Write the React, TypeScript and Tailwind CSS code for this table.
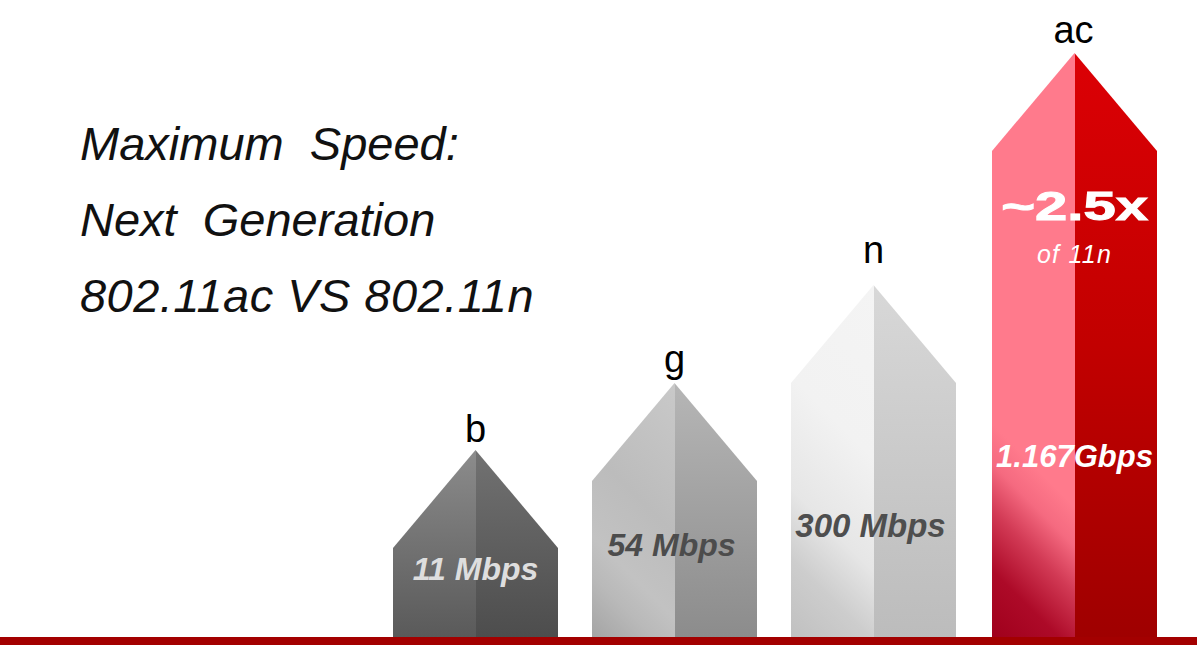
import React from "react";

type Bar = {
  label: string;
  labelGap: string;
  shape: string;
  left: string;
  right: string;
  body: React.ReactNode;
};

const bars: Bar[] = [
  {
    label: "b",
    labelGap: "mb-[2px]",
    shape: "h-[187px]",
    left: "bg-linear-to-b from-[#8c8c8c] to-[#5a5a5a]",
    right: "bg-linear-to-b from-[#727272] to-[#4d4d4d]",
    body: (
      <div className="flex flex-col items-center pt-[103px] text-[32px] leading-none font-bold italic text-[#dedede]">
        11 Mbps
      </div>
    ),
  },
  {
    label: "g",
    labelGap: "mb-[5px]",
    shape: "h-[254px]",
    left: "bg-[linear-gradient(45deg,#a4a4a4_0%,#b9b9b9_18%,#c2c2c2_30%,#bcbcbc_55%,#c9c9c9_100%)]",
    right: "bg-linear-to-b from-[#b6b6b6] to-[#8c8c8c]",
    body: (
      <div className="flex flex-col items-center pt-[146px] pr-[6px] text-[32px] leading-none font-bold italic text-[#4c4c4c]">
        54 Mbps
      </div>
    ),
  },
  {
    label: "n",
    labelGap: "mb-[16px]",
    shape: "h-[352px]",
    left: "bg-[linear-gradient(45deg,#c0c0c0_0%,#cdcdcd_18%,#e6e6e6_34%,#f2f2f2_60%,#f4f4f4_100%)]",
    right: "bg-linear-to-b from-[#d8d8d8] to-[#bcbcbc]",
    body: (
      <div className="flex flex-col items-center pt-[224px] pr-[6px] text-[33px] leading-none font-bold italic text-[#4e4e4e]">
        300 Mbps
      </div>
    ),
  },
  {
    label: "ac",
    labelGap: "mb-[4px]",
    shape: "h-[584px] ml-[2px]",
    left: "bg-[linear-gradient(45deg,#a0001c_0%,#ad0a28_10%,#d23a55_19%,#f56a80_26%,#ff7a8c_32%,#ff7a8c_100%)]",
    right: "bg-linear-to-b from-[#dc0005] via-[#c20000] to-[#9f0000]",
    body: (
      <div className="flex flex-col items-center pt-[133px] text-white">
        <span className="scale-x-[1.45] text-[40px] leading-none font-bold [-webkit-text-stroke:1px_white]">
          ~2.5x
        </span>
        <span className="mt-[16px] text-[25px] leading-none italic tracking-[0.05em]">of 11n</span>
        <span className="mt-[174px] text-[31px] leading-none font-bold italic">1.167Gbps</span>
      </div>
    ),
  },
];

const SpeedBar = ({ bar }: { bar: Bar }) => {
  return (
    <div className="flex flex-col items-center">
      <span className={`text-[38px] leading-none text-black ${bar.labelGap}`}>{bar.label}</span>
      <div
        className={`grid w-[165px] [clip-path:polygon(50%_0,100%_98px,100%_100%,0_100%,0_98px)] ${bar.shape}`}
      >
        <div className="col-start-1 row-start-1 flex">
          <div className={`w-1/2 ${bar.left}`} />
          <div className={`w-1/2 ${bar.right}`} />
        </div>
        <div className="col-start-1 row-start-1">{bar.body}</div>
      </div>
    </div>
  );
};

const App = () => {
  return (
    <div className="flex h-[661px] w-full flex-col overflow-hidden bg-white font-['Liberation_Sans',Arial,sans-serif]">
      <div className="grid flex-1">
        <div className="col-start-1 row-start-1 self-start whitespace-pre pl-[80px] pt-[106px] text-[47px] leading-[76px] italic text-[#111]">
          <p>Maximum  Speed:</p>
          <p>Next  Generation</p>
          <p className="tracking-[0.01em]">802.11ac VS 802.11n</p>
        </div>
        <div className="col-start-1 row-start-1 flex items-end gap-[34px] self-end pl-[393px]">
          {bars.map((bar) => (
            <SpeedBar key={bar.label} bar={bar} />
          ))}
        </div>
      </div>
      <div className="h-[8px] bg-[#a30000]" />
      <div className="h-[16px]" />
    </div>
  );
};

export default App;
